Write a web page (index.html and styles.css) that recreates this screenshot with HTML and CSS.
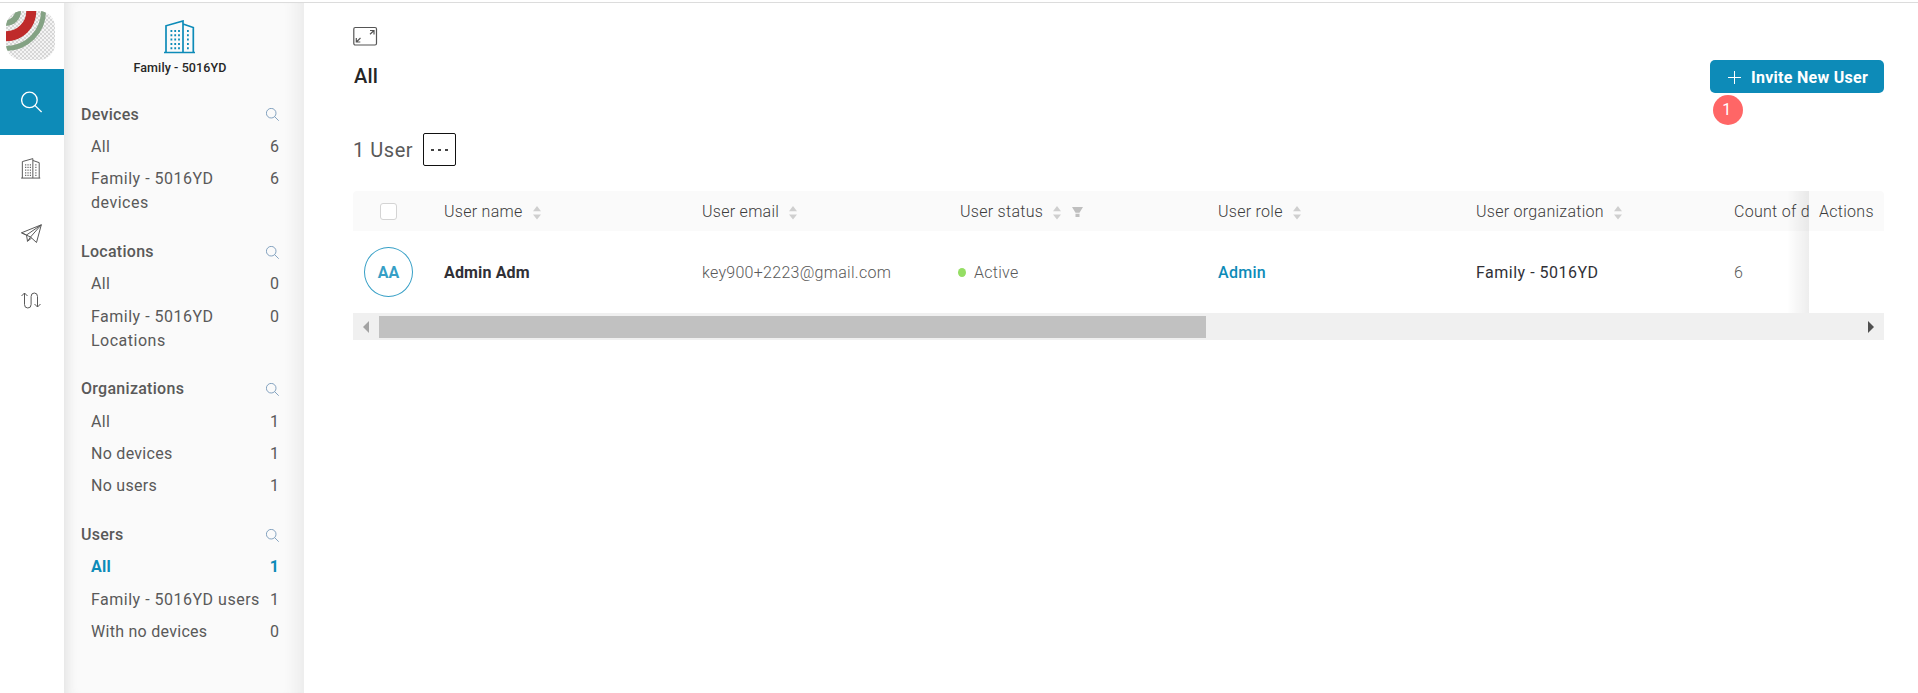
FILE: index.html
```html
<!DOCTYPE html>
<html lang="en">
<head>
<meta charset="utf-8">
<title>Users</title>
<link rel="stylesheet" href="styles.css">
</head>
<body>
<svg class="defs" width="0" height="0">
  <symbol id="search" viewBox="0 0 20 20"><circle cx="8" cy="8" r="7.4"/><path d="M13.2 13.2L19.6 19.6"/></symbol>
  <symbol id="sort" viewBox="0 0 8 14"><path d="M0 5.2L4 0l4 5.2zM0 8.6h8L4 13.6z"/></symbol>
  <symbol id="building" viewBox="0 0 32 34"><path d="M0 32.5H31M2 32.5V5.8L19 1V32.5M19 4L29.300 7.500V32.500"/><path class="win" d="M6.500 11H16M6.500 15.300H16M6.500 19.600H16M6.500 23.900H16M6.500 28.200H16M23 11H26.500M23 15.300H26.500M23 19.600H26.500M23 23.900H26.500M23 28.200H26.500"/></symbol>
</svg>
<div class="app">
  <nav class="rail">
    <div class="logo">
      <svg width="49" height="49" viewBox="0 0 49 49">
        <defs><pattern id="check" width="4" height="4" patternUnits="userSpaceOnUse"><rect width="4" height="4" fill="#f4f4f4"/><path d="M0 0h2v2H0zM2 2h2v2H2z" fill="#d6d6d6"/></pattern>
        <clipPath id="round"><rect width="49" height="49" rx="16"/></clipPath></defs>
        <g clip-path="url(#round)"><rect width="49" height="49" fill="url(#check)"/>
        <g fill="none"><circle r="12" stroke="#84a284" stroke-width="6"/><circle r="25.300" stroke="#bf2b2b" stroke-width="10"/><circle r="37.500" stroke="#84a284" stroke-width="5"/></g></g>
      </svg>
    </div>
    <a class="rail-item active"><svg class="line" width="21" height="22"><use href="#search"/></svg></a>
    <a class="rail-item"><svg class="line small-building" width="20" height="21"><use href="#building"/></svg></a>
    <a class="rail-item"><svg class="line" width="21" height="20" viewBox="0 0 21 20"><path d="M.500 8.800L20.300.800L15.500 18.500L9.500 13zM20.300.800L5.500 11L6.500 17.300L9.500 13L20.300.800M5.500 11L.500 8.800M6.500 17.300L10.700 14"/></svg></a>
    <a class="rail-item"><svg class="line" width="20" height="17" viewBox="0 0 20 17"><path d="M.500 4L3.500 1L6.500 4M3.500 1V12.500a3.300 3.500 0 0 0 6.600 0V4.500a3.200 3.500 0 0 1 6.400 0V15M13.500 12L16.500 15L19.500 12"/></svg></a>
  </nav>
  <aside class="sidebar">
    <div class="org"><svg class="org-icon" width="32" height="34"><use href="#building"/></svg><div class="org-name">Family - 5016YD</div></div>
    <section class="group">
      <h2>Devices <svg class="find" width="13" height="13"><use href="#search"/></svg></h2>
      <a class="entry"><span>All</span><b>6</b></a>
      <a class="entry wide"><span>Family - 5016YD devices</span><b>6</b></a>
    </section>
    <section class="group">
      <h2>Locations <svg class="find" width="13" height="13"><use href="#search"/></svg></h2>
      <a class="entry"><span>All</span><b>0</b></a>
      <a class="entry wide"><span>Family - 5016YD Locations</span><b>0</b></a>
    </section>
    <section class="group">
      <h2>Organizations <svg class="find" width="13" height="13"><use href="#search"/></svg></h2>
      <a class="entry"><span>All</span><b>1</b></a>
      <a class="entry"><span>No devices</span><b>1</b></a>
      <a class="entry"><span>No users</span><b>1</b></a>
    </section>
    <section class="group">
      <h2>Users <svg class="find" width="13" height="13"><use href="#search"/></svg></h2>
      <a class="entry current"><span>All</span><b>1</b></a>
      <a class="entry wide"><span>Family - 5016YD users</span><b>1</b></a>
      <a class="entry"><span>With no devices</span><b>0</b></a>
    </section>
  </aside>
  <main class="main">
    <svg class="expand" width="25" height="20" viewBox="0 0 25 20"><rect x=".8" y="1.500" width="22.700" height="17.500" rx="1.500"/><path d="M17 4.500H21V8.500M21 4.500L17 8.300M3.300 12V16H7.300M3.300 16L7.500 12"/></svg>
    <header class="title-row">
      <h1>All</h1>
      <div class="invite-wrap">
        <button class="invite"><svg width="13" height="13" viewBox="0 0 13 13"><path d="M6.500 0V13M0 6.500H13"/></svg>Invite New User</button>
        <span class="marker">1</span>
      </div>
    </header>
    <div class="count-row"><span>1 User</span><button class="more"><i></i><i></i><i></i></button></div>
    <div class="table">
      <div class="row head">
        <div class="cell pick"><span class="checkbox"></span></div>
        <div class="cell">User name<svg class="sort" width="8" height="14"><use href="#sort"/></svg></div>
        <div class="cell">User email<svg class="sort" width="8" height="14"><use href="#sort"/></svg></div>
        <div class="cell">User status<svg class="sort" width="8" height="14"><use href="#sort"/></svg><svg class="filter" width="11" height="10" viewBox="0 0 11 10"><path d="M0 0H11L7.500 5.800H3.500zM3.500 6.800H7.500V10H3.500z"/></svg></div>
        <div class="cell">User role<svg class="sort" width="8" height="14"><use href="#sort"/></svg></div>
        <div class="cell">User organization<svg class="sort" width="8" height="14"><use href="#sort"/></svg></div>
        <div class="cell last">Count of d</div>
        <div class="cell actions">Actions</div>
      </div>
      <div class="row body">
        <div class="cell pick"><span class="avatar">AA</span></div>
        <div class="cell name">Admin Adm</div>
        <div class="cell">key900+2223@gmail.com</div>
        <div class="cell"><span class="dot"></span>Active</div>
        <div class="cell role">Admin</div>
        <div class="cell company">Family - 5016YD</div>
        <div class="cell last">6</div>
        <div class="cell actions"></div>
      </div>
      <div class="scrollbar"><span class="arrow left"></span><span class="thumb"></span><span class="arrow right"></span></div>
    </div>
  </main>
</div>
</body>
</html>
```

FILE: styles.css
```css
* { box-sizing: border-box; }
body { margin: 0; font-family: Roboto, "Liberation Sans", sans-serif; font-size: 16px; letter-spacing: .28px; color: #595959; background: #fff; }
.defs { display: block; height: 0; }
h1, h2 { margin: 0; }
button { font: inherit; letter-spacing: inherit; }
svg { flex: none; display: block; overflow: visible; }
.app { display: flex; height: 693px; padding-top: 3px; overflow: hidden; background: linear-gradient(#fff 2px, #dcdcdc 2px, #dcdcdc 3px, #fff 3px); }

.rail { width: 64px; flex: none; }
.logo { height: 66px; padding: 8px 0 0 6px; }
.rail-item { height: 66px; display: flex; align-items: center; justify-content: center; padding-right: 2px; }
.rail-item.active { background: #0d8bb8; color: #fff; }
.line { fill: none; stroke: currentColor; stroke-width: 1; }
.rail-item.active .line { stroke-width: 1.3; }
.rail-item .small-building { stroke-width: 1.6; }
.win { stroke-dasharray: 1.800 2; stroke-width: 2; }

.sidebar { width: 240px; flex: none; background: #fafafa; padding: 17px 25px 0 17px; box-shadow: inset 12px 0 12px -9px #e2e2e2, inset -20px 0 14px -12px #ececec; }
.org { display: flex; flex-direction: column; align-items: center; margin-bottom: 20.500px; }
.org-icon { fill: none; stroke: #0d8bb8; stroke-width: 1.7; margin-right: 1px; }
.org-name { font-size: 12.500px; letter-spacing: .1px; font-weight: 500; line-height: 20px; margin-top: 4px; color: #262626; }
.group { margin-bottom: 16.200px; line-height: 24px; }
.group h2 { display: flex; align-items: center; justify-content: space-between; font-size: 16px; font-weight: 500; padding: 4.200px 0; }
.find { fill: none; stroke: #6f93b5; stroke-width: 1.300; }
.entry { display: flex; justify-content: space-between; padding: 4.200px 0 4.200px 10px; }
.entry span { max-width: 172px; }
.entry b { font-weight: 400; letter-spacing: 0; }
.wide { letter-spacing: .5px; }
.entry.current, .entry.current b { color: #0d8bb8; font-weight: 700; }

.main { flex: 1; min-width: 0; padding: 23px 34px 0 49px; }
.expand { fill: none; stroke: #555; stroke-width: 1.200; }
.title-row { display: flex; justify-content: space-between; margin-top: 14px; height: 62px; }
h1 { font-size: 20px; font-weight: 500; line-height: 32px; color: #262626; letter-spacing: .2px; padding-left: 1px; }
.invite-wrap { position: relative; }
.invite { display: flex; align-items: center; width: 174px; height: 33px; border: 0; border-radius: 5px; padding: 1px 0 0 18px; gap: 10px; background: #0d8bb8; color: #fff; font-weight: 700; white-space: nowrap; }
.invite svg { stroke: #fff; stroke-width: 1; fill: none; }
.marker { position: absolute; left: 3px; top: 35px; width: 30px; height: 30px; border-radius: 50%; background: #ff6666; color: #fff; line-height: 29px; text-align: center; padding-right: 2px; }
.count-row { display: flex; align-items: center; gap: 10px; margin-top: 11px; height: 33px; font-size: 20px; letter-spacing: .55px; }
.more { width: 33px; height: 33px; background: #fff; border: 1px solid #111; border-radius: 2px; display: flex; align-items: center; justify-content: center; gap: 4px; padding: 0; }
.more i { width: 3px; height: 2px; background: #444; }

.table { margin-top: 25px; overflow: hidden; width: 1531px; border-radius: 4px 4px 0 0; }
.row { display: flex; height: 40px; background: #fafafa; font-weight: 300; color: #3c3c3c; }
.row.body { height: 82px; background: #fff; color: #595959; }
.cell { width: 258px; flex: none; display: flex; align-items: center; padding-left: 20px; padding-top: 1px; white-space: nowrap; }
.cell.pick { width: 71px; padding: 0; justify-content: center; }
.cell.last { width: 95px; background: linear-gradient(to right, transparent 73px, rgba(0,0,0,.07)); }
.cell.actions { width: 75px; padding-left: 10px; }
.checkbox { width: 17px; height: 17px; border: 1px solid #d4d4d4; border-radius: 3px; background: #fff; }
.sort { margin: 2px 0 0 10px; fill: #cfcfcf; }
.filter { margin: 0 0 0 11px; fill: #bfbfbf; }
.avatar { width: 49px; height: 50px; border: 1px solid #369fc6; border-radius: 50%; display: flex; align-items: center; justify-content: center; color: #369fc6; font-weight: 700; letter-spacing: 0; }
.name { font-weight: 700; color: #303036; letter-spacing: .15px; }
.role { font-weight: 500; color: #0d8bb8; }
.company { font-weight: 400; color: #303036; letter-spacing: .5px; }
.dot { width: 8px; height: 9px; border-radius: 50%; background: #95de64; margin: 0 8px 0 -2px; }
.scrollbar { display: flex; align-items: center; height: 27px; background: #f0f0f0; }
.arrow { border: 6px solid transparent; }
.arrow.left { border-right-color: #a3a3a3; border-left: 0; margin: 0 10px; }
.arrow.right { border-left-color: #505050; border-right: 0; margin: 0 10px 0 auto; }
.thumb { width: 827px; height: 22px; background: #c1c1c1; }
```
